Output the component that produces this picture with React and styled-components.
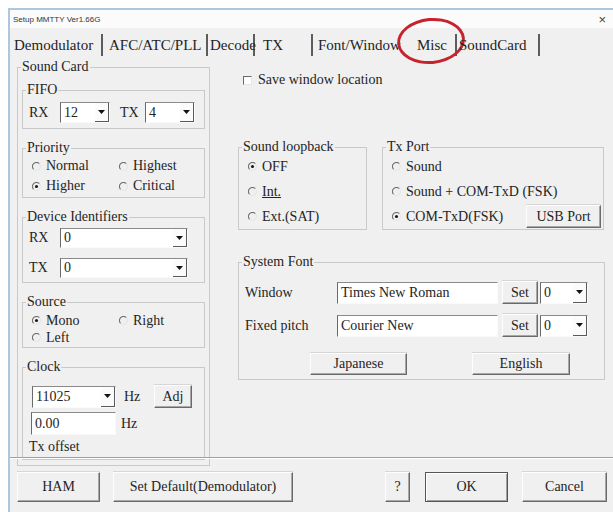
import styled, { createGlobalStyle } from "styled-components";

const GlobalStyle = createGlobalStyle`
  html, body {
    margin: 0;
    padding: 0;
    background: #ffffff;
  }
  body {
    width: 613px;
    height: 512px;
    overflow: hidden;
  }
`;

const Frame = styled.div`
  margin: 8px 0 0 8px;
  height: 504px;
  box-sizing: border-box;
  border-top: 2px solid #adc7de;
  border-left: 2px solid #adc7de;
  background: #f0f0f0;
  display: flex;
  flex-direction: column;
  overflow: hidden;
  font-family: "Liberation Serif", "Times New Roman", serif;
  font-size: 14px;
  color: #242424;
`;

const TitleBar = styled.div`
  height: 18px;
  flex: none;
  background: #fbfbfb;
  display: flex;
  align-items: center;
  justify-content: space-between;
  padding: 0 7px 0 3px;
  font-family: "Liberation Sans", Arial, sans-serif;
  font-size: 8px;
  color: #333;
`;

const Close = styled.span`
  font-size: 13px;
  color: #444;
  line-height: 1;
`;

const TabStrip = styled.div`
  height: 28px;
  flex: none;
  display: flex;
  align-items: flex-end;
`;

const Tab = styled.div`
  position: relative;
  width: ${(p) => p.$w}px;
  height: 22px;
  box-sizing: border-box;
  padding-left: ${(p) => p.$pl}px;
  display: flex;
  align-items: center;
  font-size: 15px;
  white-space: nowrap;
  border-right: ${(p) => (p.$edge ? "2px solid #5c5c5c" : "2px solid transparent")};
`;

/* hand-drawn red ring around the Misc tab */
const Ring = styled.span`
  position: absolute;
  left: -8px;
  top: -16px;
  width: 68px;
  height: 46px;
  box-sizing: border-box;
  border: 3px solid #c5232d;
  border-radius: 50%;
  transform: rotate(-5deg);
  pointer-events: none;
`;

const Page = styled.div`
  flex: 1;
  display: flex;
  padding-left: 7px;
  min-height: 0;
`;

const Group = styled.fieldset`
  margin: 0;
  padding: 0;
  min-width: 0;
  box-sizing: border-box;
  width: ${(p) => p.$w}px;
  height: ${(p) => p.$h}px;
  border: 1px solid #c9c9c9;
  display: flex;
  flex-direction: column;
`;

const Caption = styled.legend`
  padding: 0 1px;
  margin-left: 3px;
  line-height: 14px;
`;

const LeftCol = styled.div`
  margin-top: 4px;
`;

const Stack = styled.div`
  display: flex;
  flex-direction: column;
  gap: ${(p) => p.$gap || 0}px;
  padding: ${(p) => p.$pad || "0"};
`;

const Row = styled.div`
  display: flex;
  align-items: center;
  height: ${(p) => p.$h || 20}px;
  padding-left: ${(p) => p.$pl || 0}px;
  gap: ${(p) => p.$gap || 0}px;
`;

const Label = styled.span`
  width: ${(p) => (p.$w ? `${p.$w}px` : "auto")};
  flex: none;
  white-space: nowrap;
`;

const Grid = styled.div`
  display: grid;
  grid-template-columns: ${(p) => p.$cols};
  grid-auto-rows: ${(p) => p.$rh}px;
  padding: ${(p) => p.$pad};
  align-items: center;
`;

const Field = styled.div`
  width: ${(p) => p.$w}px;
  height: ${(p) => p.$h || 20}px;
  box-sizing: border-box;
  flex: none;
  display: flex;
  align-items: center;
  background: #ffffff;
  border-top: 1px solid #8a8a8a;
  border-left: 1px solid #6a6a6a;
  border-right: 1px solid #fafafa;
  border-bottom: 1px solid #fafafa;
`;

const FieldText = styled.span`
  flex: 1;
  padding-left: 3px;
  white-space: nowrap;
  overflow: hidden;
`;

const DropButton = styled.span`
  width: 13px;
  align-self: stretch;
  display: flex;
  align-items: center;
  justify-content: center;
  background: #fbfbfb;
  border-right: 1px solid #5a5a5a;
  border-bottom: 1px solid #5a5a5a;
`;

const Button = styled.button`
  width: ${(p) => p.$w}px;
  height: ${(p) => p.$h || 23}px;
  flex: none;
  margin: 0;
  padding: 0;
  box-sizing: border-box;
  font: inherit;
  color: #242424;
  background: #f0f0f0;
  border: 1px solid;
  border-color: #fdfdfd #6a6a6a #6a6a6a #fdfdfd;
  box-shadow: inset -1px -1px 0 #a8a8a8, 0 -1px 0 #d6d6d6;
`;

const DefaultButton = styled(Button)`
  border: 1px solid #555;
  box-shadow: inset 1px 1px 0 #fff, inset -1px -1px 0 #a0a0a0;
`;

const Choice = styled.label`
  display: flex;
  align-items: center;
  gap: 5px;
  white-space: nowrap;
  min-width: 0;
`;

const Mark = styled.svg`
  width: 9px;
  height: 9px;
  flex: none;
`;

const Check = styled.span`
  width: 9px;
  height: 9px;
  flex: none;
  box-sizing: border-box;
  background: #fff;
  border-top: 1px solid #6a6a6a;
  border-left: 1px solid #6a6a6a;
  border-right: 1px solid #e6e6e6;
  border-bottom: 1px solid #e6e6e6;
`;

const RightCol = styled.div`
  margin-left: 28px;
  display: flex;
  flex-direction: column;
`;

const CheckRow = styled.label`
  display: flex;
  align-items: center;
  gap: 6px;
  height: 16px;
  margin: 16px 0 0 5px;
`;

const Pair = styled.div`
  display: flex;
  gap: 15px;
  margin-top: 52px;
`;

const Separator = styled.div`
  flex: none;
  height: 0;
  border-top: 1px solid #a0a0a0;
  border-bottom: 1px solid #ffffff;
`;

const ButtonBar = styled.div`
  flex: none;
  height: 40px;
  display: flex;
  align-items: flex-start;
  padding: 13px 6px 0 7px;
  gap: 13px;
`;

const Spacer = styled.div`
  flex: 1;
`;

const Arrow = () => (
  <svg width="7" height="4" viewBox="0 0 7 4">
    <path d="M0 0h7L3.5 4z" fill="#111" />
  </svg>
);

const Radio = ({ on }) => (
  <Mark viewBox="0 0 10 10">
    <path d="M8.2 1.8A4.5 4.5 0 0 0 1.8 8.2" stroke="#707070" strokeWidth="1.2" fill="none" />
    <path d="M8.2 1.8A4.5 4.5 0 0 1 1.8 8.2" stroke="#e2e2e2" strokeWidth="1" fill="none" />
    {on && <circle cx="5" cy="5" r="1.7" fill="#151515" />}
  </Mark>
);

const Option = ({ on, children }) => (
  <Choice>
    <Radio on={on} />
    {children}
  </Choice>
);

const Combo = ({ w, h, value }) => (
  <Field $w={w} $h={h}>
    <FieldText>{value}</FieldText>
    <DropButton>
      <Arrow />
    </DropButton>
  </Field>
);

const Edit = ({ w, h, value }) => (
  <Field $w={w} $h={h}>
    <FieldText>{value}</FieldText>
  </Field>
);

const tabs = [
  { name: "Demodulator", w: 93, pl: 4, edge: true },
  { name: "AFC/ATC/PLL", w: 105, pl: 6, edge: true },
  { name: "Decode", w: 47, pl: 2, edge: true },
  { name: "TX", w: 58, pl: 8, edge: true },
  { name: "Font/Window", w: 92, pl: 5, edge: false },
  { name: "Misc", w: 52, pl: 12, edge: true, ring: true },
  { name: "SoundCard", w: 83, pl: 2, edge: true },
];

export default function App() {
  return (
    <>
      <GlobalStyle />
      <Frame>
        <TitleBar>
          <span>Setup MMTTY Ver1.66G</span>
          <Close>×</Close>
        </TitleBar>

        <TabStrip>
          {tabs.map((t) => (
            <Tab key={t.name} $w={t.w} $pl={t.pl} $edge={t.edge}>
              {t.name}
              {t.ring && <Ring />}
            </Tab>
          ))}
        </TabStrip>

        <Page>
          <LeftCol>
            <Group $w={193} $h={406}>
              <Caption>Sound Card</Caption>
              <Stack $gap={12} $pad="9px 0 0 4px">
                <Group $w={183} $h={46}>
                  <Caption>FIFO</Caption>
                  <Row $h={21} $pl={6} style={{ marginTop: 5 }}>
                    <Label $w={31}>RX</Label>
                    <Combo w={50} h={21} value="12" />
                    <Label $w={25} style={{ marginLeft: 10 }}>
                      TX
                    </Label>
                    <Combo w={50} h={21} value="4" />
                  </Row>
                </Group>

                <Group $w={183} $h={57}>
                  <Caption>Priority</Caption>
                  <Grid $cols="87px 1fr" $rh={20} $pad="1px 0 0 9px">
                    <Option>Normal</Option>
                    <Option>Highest</Option>
                    <Option on>Higher</Option>
                    <Option>Critical</Option>
                  </Grid>
                </Group>

                <Group $w={183} $h={73}>
                  <Caption>Device Identifiers</Caption>
                  <Stack $gap={10} $pad="4px 0 0 0">
                    <Row $pl={6}>
                      <Label $w={31}>RX</Label>
                      <Combo w={128} value="0" />
                    </Row>
                    <Row $pl={6}>
                      <Label $w={31}>TX</Label>
                      <Combo w={128} value="0" />
                    </Row>
                  </Stack>
                </Group>

                <Group $w={183} $h={53}>
                  <Caption>Source</Caption>
                  <Grid $cols="87px 1fr" $rh={17} $pad="3px 0 0 9px">
                    <Option on>Mono</Option>
                    <Option>Right</Option>
                    <Option>Left</Option>
                  </Grid>
                </Group>

                <Group $w={183} $h={100}>
                  <Caption>Clock</Caption>
                  <Stack $gap={4} $pad="11px 0 0 0">
                    <Row $h={23} $pl={9}>
                      <Combo w={84} h={22} value="11025" />
                      <Label $w={30} style={{ marginLeft: 8 }}>
                        Hz
                      </Label>
                      <Button $w={38} $h={23}>
                        Adj
                      </Button>
                    </Row>
                    <Row $h={23} $pl={8}>
                      <Edit w={85} h={23} value="0.00" />
                      <Label style={{ marginLeft: 5 }}>Hz</Label>
                    </Row>
                    <Row $h={16} $pl={6}>
                      <Label>Tx offset</Label>
                    </Row>
                  </Stack>
                </Group>
              </Stack>
            </Group>
          </LeftCol>

          <RightCol>
            <CheckRow>
              <Check />
              Save window location
            </CheckRow>

            <Pair>
              <Group $w={129} $h={90}>
                <Caption>Sound loopback</Caption>
                <Grid $cols="1fr" $rh={25} $pad="0 0 0 9px">
                  <Option on>OFF</Option>
                  <Option>
                    <u>Int.</u>
                  </Option>
                  <Option>Ext.(SAT)</Option>
                </Grid>
              </Group>

              <Group $w={222} $h={90}>
                <Caption>Tx Port</Caption>
                <Grid $cols="minmax(0, 1fr) 75px" $rh={25} $pad="0 2px 0 9px">
                  <Option>Sound</Option>
                  <span />
                  <Option>Sound + COM-TxD (FSK)</Option>
                  <span />
                  <Option on>COM-TxD(FSK)</Option>
                  <Button $w={75} $h={23}>
                    USB Port
                  </Button>
                </Grid>
              </Group>
            </Pair>

            <Group $w={367} $h={125} style={{ marginTop: 25 }}>
              <Caption>System Font</Caption>
              <Stack $gap={10} $pad="12px 0 0 6px">
                <Row $h={23}>
                  <Label $w={92}>Window</Label>
                  <Edit w={161} h={22} value="Times New Roman" />
                  <Button $w={36} $h={23} style={{ marginLeft: 4 }}>
                    Set
                  </Button>
                  <span style={{ marginLeft: 2 }}>
                    <Combo w={48} h={22} value="0" />
                  </span>
                </Row>
                <Row $h={23}>
                  <Label $w={92}>Fixed pitch</Label>
                  <Edit w={161} h={22} value="Courier New" />
                  <Button $w={36} $h={23} style={{ marginLeft: 4 }}>
                    Set
                  </Button>
                  <span style={{ marginLeft: 2 }}>
                    <Combo w={48} h={22} value="0" />
                  </span>
                </Row>
              </Stack>
              <Row $h={22} $pl={71} $gap={65} style={{ marginTop: 16 }}>
                <Button $w={97} $h={22}>
                  Japanese
                </Button>
                <Button $w={98} $h={22}>
                  English
                </Button>
              </Row>
            </Group>
          </RightCol>
        </Page>

        <Separator />

        <ButtonBar>
          <Button $w={83} $h={30}>
            HAM
          </Button>
          <Button $w={180} $h={30}>
            Set Default(Demodulator)
          </Button>
          <Spacer />
          <Button $w={25} $h={30}>
            ?
          </Button>
          <DefaultButton $w={83} $h={30} style={{ marginLeft: 2 }}>
            OK
          </DefaultButton>
          <Button $w={85} $h={30} style={{ marginLeft: 1 }}>
            Cancel
          </Button>
        </ButtonBar>
      </Frame>
    </>
  );
}
